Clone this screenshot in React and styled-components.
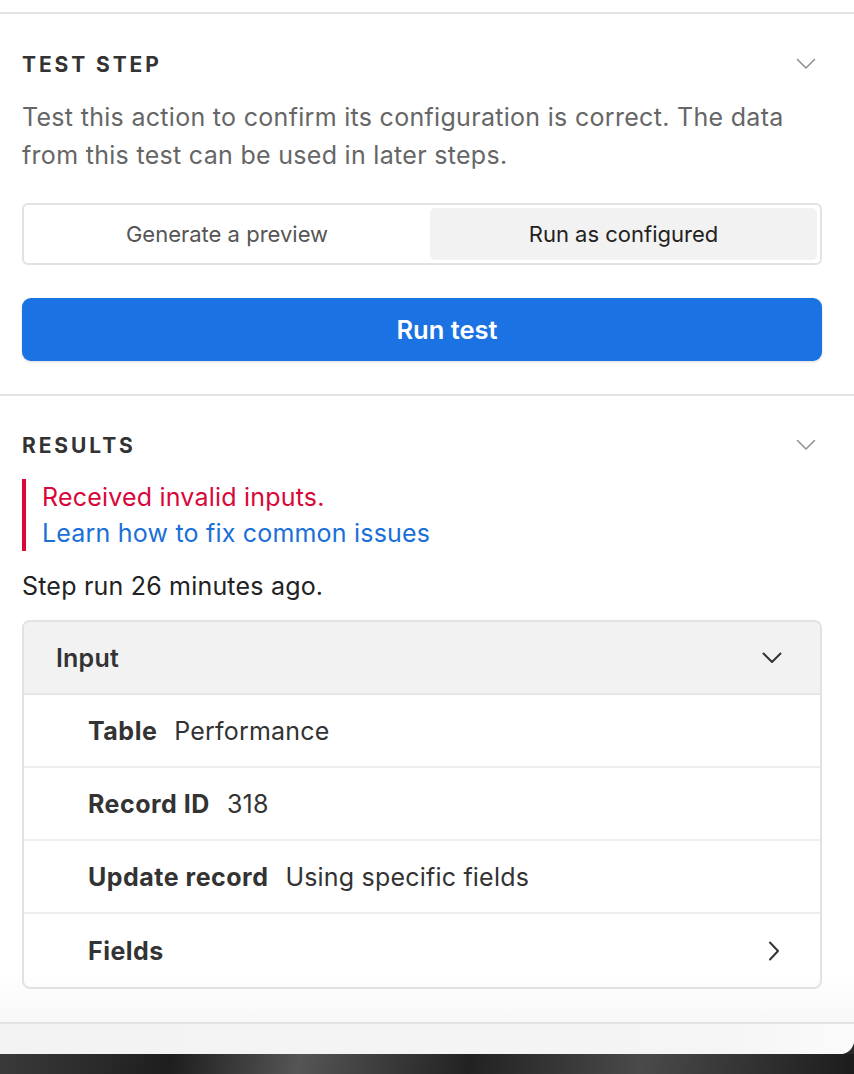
import React from "react";
import styled, { createGlobalStyle } from "styled-components";

const GlobalStyle = createGlobalStyle`
  html, body {
    margin: 0;
    padding: 0;
    background: #2b2b2b;
  }
  body {
    font-family: Inter, "Noto Sans", "Liberation Sans", sans-serif;
    -webkit-font-smoothing: antialiased;
  }
`;

// flat chevron, 18 x 10 like the mac ones
const Chevron = ({ dir = "down", color = "#8f8f8f", width = 1.5 }) =>
  dir === "down" ? (
    <svg width="20" height="12" viewBox="0 0 20 12" fill="none">
      <polyline points="1.5,1.5 10,10 18.5,1.5" stroke={color} strokeWidth={width} strokeLinecap="round" strokeLinejoin="round" />
    </svg>
  ) : (
    <svg width="12" height="20" viewBox="0 0 12 20" fill="none">
      <polyline points="2,1.5 10,10 2,18.5" stroke={color} strokeWidth={width} strokeLinecap="round" strokeLinejoin="round" />
    </svg>
  );

const App = () => {
  return (
    <>
      <GlobalStyle />
      <Window>
        <TopStrip />
        <Section>
          <SectionHeader>
            <SectionTitle>TEST STEP</SectionTitle>
            <Chevron />
          </SectionHeader>
          <Description>
            Test this action to confirm its configuration is correct. The data
            from this test can be used in later steps.
          </Description>
          <Segmented>
            <Segment>Generate a preview</Segment>
            <Segment active>Run as configured</Segment>
          </Segmented>
          <RunButton>Run test</RunButton>
        </Section>
        <Section results>
          <SectionHeader>
            <SectionTitle>RESULTS</SectionTitle>
            <Chevron />
          </SectionHeader>
          <ErrorBlock>
            <ErrorText>Received invalid inputs.</ErrorText>
            <HelpLink href="#">Learn how to fix common issues</HelpLink>
          </ErrorBlock>
          <RunInfo>Step run 26 minutes ago.</RunInfo>
          <Card>
            <CardHeader>
              <span>Input</span>
              <Chevron color="#333" width={2} />
            </CardHeader>
            <Row>
              <Label>Table</Label>
              <Value>Performance</Value>
            </Row>
            <Row>
              <Label>Record ID</Label>
              <Value>318</Value>
            </Row>
            <Row>
              <Label>Update record</Label>
              <Value>Using specific fields</Value>
            </Row>
            <Row last>
              <Label>Fields</Label>
              <Spacer />
              <Chevron dir="right" color="#333" width={2} />
            </Row>
          </Card>
        </Section>
        <BottomBand />
      </Window>
      <Desktop />
    </>
  );
};

export default App;

const Window = styled.div`
  display: flex;
  flex-direction: column;
  background: #ffffff;
  border-bottom-right-radius: 14px;
  overflow: hidden;
`;

const TopStrip = styled.div`
  height: 12px;
  border-bottom: 2px solid #e3e3e3;
  background: #ffffff;
`;

const Section = styled.div`
  display: flex;
  flex-direction: column;
  padding: ${(p) => (p.results ? "37px 32px 33px 22px" : "38px 32px 33px 22px")};
  border-bottom: 2px solid #e3e3e3;
  background: ${(p) =>
    p.results ? "linear-gradient(to bottom, #fff 0, #fff 92%, #f7f7f7 100%)" : "#fff"};
`;

const SectionHeader = styled.div`
  display: flex;
  align-items: center;
  justify-content: space-between;
  height: 24px;
  padding-right: 6px;
`;

const SectionTitle = styled.h2`
  margin: 0;
  font-size: 21px;
  font-weight: 700;
  letter-spacing: 2.9px;
  color: #333;
`;

const Description = styled.p`
  margin: 22px 0 0;
  font-size: 25px;
  letter-spacing: 0.3px;
  line-height: 38px;
  color: #666;
`;

const Segmented = styled.div`
  display: grid;
  grid-template-columns: 400px 1fr;
  gap: 3px;
  margin: 29px 0 0 0;
  padding: 3px;
  height: 62px;
  box-sizing: border-box;
  border: 2px solid #e2e2e2;
  border-radius: 6px;
`;

const Segment = styled.div`
  display: flex;
  align-items: center;
  justify-content: center;
  font-size: 22px;
  border-radius: 5px;
  color: ${(p) => (p.active ? "#222" : "#555")};
  background: ${(p) => (p.active ? "#f2f2f2" : "transparent")};
`;

const RunButton = styled.button`
  margin: 33px 0 0 0;
  height: 63px;
  padding: 0 0 0 50px;
  border: none;
  border-radius: 9px;
  background: #1a72e3;
  color: #fff;
  font-family: inherit;
  font-size: 25.5px;
  font-weight: 600;
  box-shadow: 0 1px 3px rgba(0, 0, 0, 0.15);
  cursor: pointer;
`;

const ErrorBlock = styled.div`
  display: flex;
  flex-direction: column;
  margin-top: 22px;
  padding-left: 16px;
  border-left: 4px solid #d8073a;
  font-size: 25px;
  letter-spacing: 0.2px;
  line-height: 36px;
`;

const ErrorText = styled.span`
  color: #d8073a;
`;

const HelpLink = styled.a`
  color: #1a6fd8;
  text-decoration: none;
`;

const RunInfo = styled.div`
  margin-top: 17px;
  font-size: 25px;
  letter-spacing: 0.2px;
  line-height: 36px;
  color: #222;
`;

const Card = styled.div`
  margin: 16px 0 0 0;
  border: 2px solid #e2e2e2;
  border-radius: 8px;
  overflow: hidden;
`;

const CardHeader = styled.div`
  display: flex;
  align-items: center;
  justify-content: space-between;
  height: 71px;
  padding: 0 38px 0 32px;
  background: #f2f2f2;
  border-bottom: 2px solid #e6e6e6;
  font-size: 25px;
  font-weight: 600;
  letter-spacing: 0.2px;
  color: #333;
`;

const Row = styled.div`
  display: flex;
  align-items: center;
  gap: 17px;
  height: ${(p) => (p.last ? "73px" : "71px")};
  padding: 0 40px 0 64px;
  border-bottom: ${(p) => (p.last ? "none" : "2px solid #efefef")};
  font-size: 25px;
  letter-spacing: 0.2px;
`;

const Label = styled.span`
  font-weight: 700;
  letter-spacing: 0.5px;
  color: #333;
`;

const Value = styled.span`
  color: #333;
`;

const Spacer = styled.div`
  flex: 1;
`;

const BottomBand = styled.div`
  height: 30px;
  background: linear-gradient(to right, #f3f3f3 0, #f5f5f5 85%, #fbfbfb 100%);
`;

const Desktop = styled.div`
  height: 20px;
  background: linear-gradient(100deg, #3a3a3a 0, #1e1e1e 20%, #555 35%, #222 55%, #4a4a4a 75%, #1c1c1c 100%);
`;
